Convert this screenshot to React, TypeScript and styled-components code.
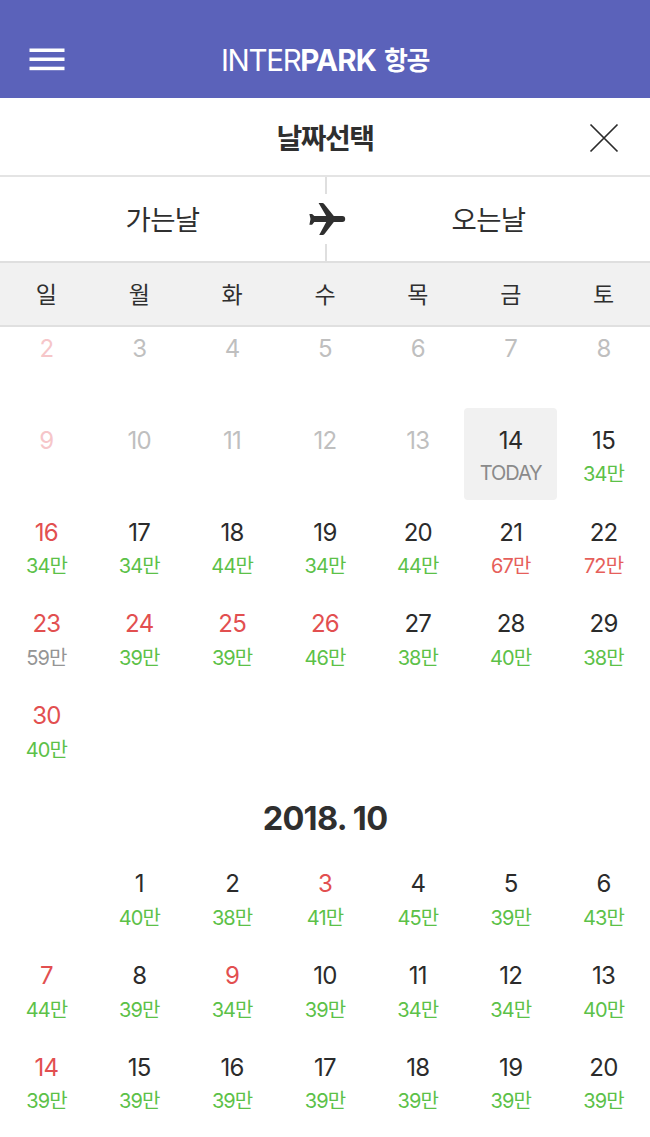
import React from "react";
import styled, { createGlobalStyle } from "styled-components";

const GlobalStyle = createGlobalStyle`
  * { box-sizing: border-box; }
  body {
    margin: 0;
    background: #fff;
    color: #2f2f2f;
    font-family: Inter, "Noto Sans CJK KR", sans-serif;
  }
`;

type Tone = "default" | "holiday" | "past" | "pastHoliday";
type PriceTone = "low" | "high" | "mid" | "today";

const dayColors: Record<Tone, string> = {
  default: "#2b2b2b",
  holiday: "#e24f50",
  past: "#bfbfbf",
  pastHoliday: "#f6c6c9",
};

const priceColors: Record<PriceTone, string> = {
  low: "#5cc148",
  high: "#e65f5b",
  mid: "#959595",
  today: "#8a8a8a",
};

const Screen = styled.div`
  display: flex;
  flex-direction: column;
  height: 1137px;
  overflow: hidden;
`;

const AppBar = styled.header`
  flex: none;
  display: grid;
  grid-template-columns: 94px 1fr 94px;
  align-items: center;
  height: 98px;
  padding-top: 20px;
  background: #5b62ba;
`;

const MenuButton = styled.button`
  display: flex;
  margin: 0 0 0 29px;
  padding: 0;
  border: 0;
  background: none;
`;

const Brand = styled.div`
  display: flex;
  justify-content: center;
  align-items: center;
  height: 40px;
  margin-top: 2px;
  color: #fff;
  font-size: 29.5px;
  line-height: 40px;
  white-space: pre;
`;

const BrandLight = styled.span`
  font-weight: 400;
  letter-spacing: -1.3px;
`;

const BrandBold = styled.span`
  font-weight: 700;
  letter-spacing: -0.9px;
`;

const BrandService = styled.span`
  margin: 2px 0 0 8px;
  font-size: 26px;
  font-weight: 700;
  letter-spacing: -1.4px;
`;

const TitleBar = styled.div`
  flex: none;
  display: grid;
  grid-template-columns: 90px 1fr 90px;
  align-items: center;
  height: 79px;
  border-bottom: 2px solid #e4e4e4;
`;

const Title = styled.h1`
  grid-column: 2;
  margin: 4px 0 0;
  text-align: center;
  font-size: 28px;
  line-height: 40px;
  font-weight: 700;
  letter-spacing: -1.5px;
`;

const CloseButton = styled.button`
  display: flex;
  margin: 3px 0 0 29px;
  padding: 0;
  border: 0;
  background: none;
`;

const TripTabs = styled.div`
  flex: none;
  display: grid;
  grid-template-columns: 325px 2px 1fr;
  height: 86px;
  border-bottom: 2px solid #dfdfdf;
`;

const TripTab = styled.div`
  display: flex;
  align-items: center;
  justify-content: center;
  padding-bottom: 3px;
  font-size: 27.5px;
  letter-spacing: -0.7px;
`;

const Divider = styled.div`
  display: flex;
  flex-direction: column;
  align-items: center;
  justify-content: space-between;
`;

const DividerLine = styled.span`
  width: 2px;
  height: 17px;
  background: #dfdfdf;
`;

const Plane = styled.svg`
  flex: none;
  width: 38px;
  height: 34px;
  margin-left: 2px;
`;

const WeekHeader = styled.div`
  flex: none;
  display: grid;
  grid-template-columns: repeat(7, 1fr);
  align-items: center;
  height: 64px;
  padding-bottom: 3px;
  background: #f1f1f1;
  border-bottom: 2px solid #e0e0e0;
  text-align: center;
  font-size: 23px;
`;

const Calendar = styled.main`
  flex: 1;
  min-height: 0;
  overflow: hidden;
`;

const Month = styled.section<{ $scrolled?: boolean }>`
  margin-top: ${(p) => (p.$scrolled ? "-10.3px" : "0")};
`;

const MonthTitle = styled.h2`
  margin: 0;
  height: 76.5px;
  padding-top: 23.5px;
  text-align: center;
  font-size: 32.5px;
  line-height: 40px;
  font-weight: 700;
  letter-spacing: -0.7px;
`;

const Days = styled.div`
  display: grid;
  grid-template-columns: repeat(7, 1fr);
  grid-auto-rows: 91.75px;
`;

const Day = styled.div<{ $tone: Tone; $today?: boolean }>`
  display: flex;
  flex-direction: column;
  align-items: center;
  padding-top: 17.5px;
  border-radius: 4px;
  background: ${(p) => (p.$today ? "#f1f1f1" : "transparent")};
  color: ${(p) => dayColors[p.$tone]};
  font-size: 24px;
  line-height: 30px;
  letter-spacing: -0.7px;
`;

const Price = styled.span<{ $tone: PriceTone }>`
  margin-top: ${(p) => (p.$tone === "today" ? "2.5px" : "3.5px")};
  color: ${(p) => priceColors[p.$tone]};
  font-size: 20px;
  font-weight: 400;
  line-height: 30px;
  letter-spacing: ${(p) => (p.$tone === "today" ? "-1.1px" : "-0.9px")};
  white-space: nowrap;
`;

interface DayData {
  day: number;
  tone?: Tone;
  price?: string;
  priceTone?: PriceTone;
}

const weekdays = ["일", "월", "화", "수", "목", "금", "토"];

const pastDays: DayData[] = Array.from({ length: 12 }, (_, i) => ({
  day: i + 2,
  tone: i % 7 === 0 ? "pastHoliday" : "past",
}));

const fares = (
  first: number,
  amounts: number[],
  holidays: number[],
  tones: Record<number, PriceTone> = {}
): DayData[] =>
  amounts.map((amount, i) => ({
    day: first + i,
    tone: holidays.includes(first + i) ? "holiday" : "default",
    price: `${amount}만`,
    priceTone: tones[first + i] ?? "low",
  }));

const september: DayData[] = [
  ...pastDays,
  { day: 14, price: "TODAY", priceTone: "today" },
  ...fares(
    15,
    [34, 34, 34, 44, 34, 44, 67, 72, 59, 39, 39, 46, 38, 40, 38, 40],
    [16, 23, 24, 25, 26, 30],
    { 21: "high", 22: "high", 23: "mid" }
  ),
];

const october = fares(
  1,
  [40, 38, 41, 45, 39, 43, 44, 39, 34, 39, 34, 34, 40, 39, 39, 39, 39, 39, 39, 39],
  [3, 7, 9, 14]
);

function DayGrid({ days, offset = 0 }: { days: DayData[]; offset?: number }) {
  return (
    <Days>
      {Array.from({ length: offset }, (_, i) => (
        <span key={`blank-${i}`} />
      ))}
      {days.map(({ day, tone = "default", price, priceTone = "low" }) => (
        <Day key={day} $tone={tone} $today={priceTone === "today"}>
          {day}
          {price && <Price $tone={priceTone}>{price}</Price>}
        </Day>
      ))}
    </Days>
  );
}

export default function App() {
  return (
    <Screen>
      <GlobalStyle />
      <AppBar>
        <MenuButton aria-label="메뉴">
          <svg width="36" height="23" viewBox="0 0 36 23" fill="#fff">
            <rect x="0.5" y="0.5" width="35" height="3.5" />
            <rect x="0.5" y="9.5" width="35" height="3.5" />
            <rect x="0.5" y="18.7" width="35" height="3.5" />
          </svg>
        </MenuButton>
        <Brand>
          <BrandLight>INTER</BrandLight>
          <BrandBold>PARK</BrandBold>
          <BrandService>항공</BrandService>
        </Brand>
      </AppBar>
      <TitleBar>
        <Title>날짜선택</Title>
        <CloseButton aria-label="닫기">
          <svg width="30" height="30" viewBox="0 0 30 30" stroke="#2b2b2b" strokeWidth="1.7">
            <path d="M1.5 1.5 28.5 28.5M28.5 1.5 1.5 28.5" />
          </svg>
        </CloseButton>
      </TitleBar>
      <TripTabs>
        <TripTab>가는날</TripTab>
        <Divider>
          <DividerLine />
          <Plane viewBox="0 0 38 34" fill="#2f2f2f">
            <path d="M10.6 1H14.4Q15.4 1 16 1.8L25.8 14.1H34.3A2.9 2.9 0 0 1 34.3 19.9H25.8L16.3 32.2Q15.7 33 14.7 33H11.2L18.2 19.9H6.3L4.1 22.7H1.4L2.5 17L1.4 11.9H4.1L6.3 14.1H18.2L10.6 1Z" />
          </Plane>
          <DividerLine />
        </Divider>
        <TripTab>오는날</TripTab>
      </TripTabs>
      <WeekHeader>
        {weekdays.map((name) => (
          <span key={name}>{name}</span>
        ))}
      </WeekHeader>
      <Calendar>
        <Month $scrolled>
          <DayGrid days={september} />
        </Month>
        <Month>
          <MonthTitle>2018. 10</MonthTitle>
          <DayGrid days={october} offset={1} />
        </Month>
      </Calendar>
    </Screen>
  );
}
